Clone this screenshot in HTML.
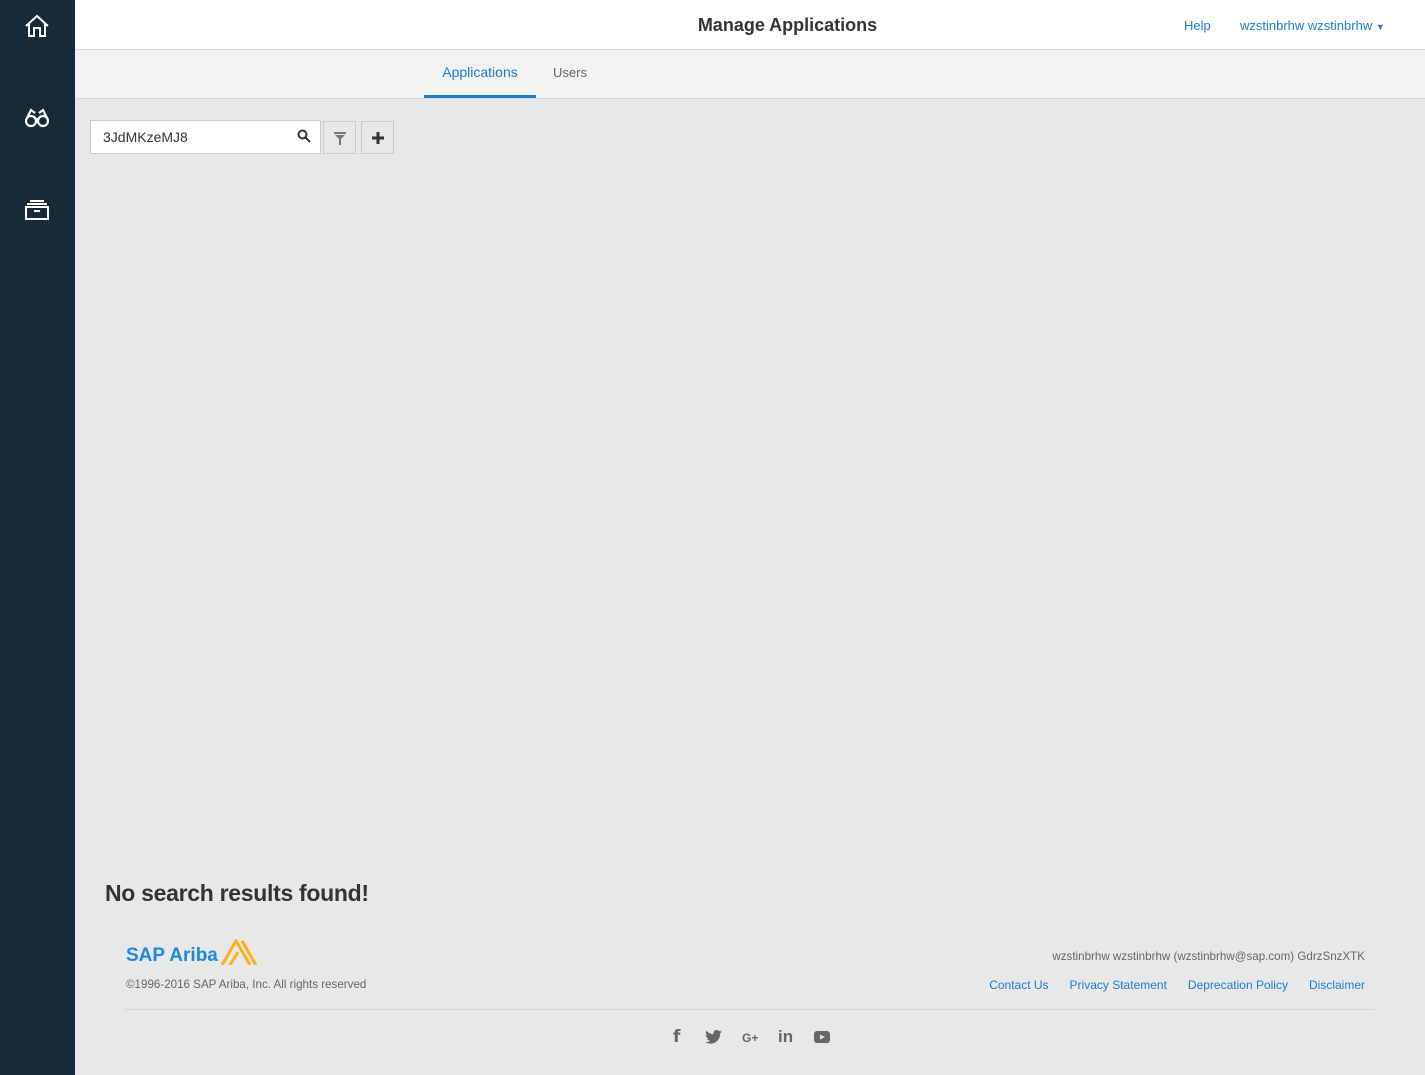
<!DOCTYPE html>
<html><head><meta charset="utf-8"><style>
*{margin:0;padding:0;box-sizing:border-box}
body{width:1425px;height:1075px;background:#e8e8e8;font-family:"Liberation Sans",sans-serif;position:relative;overflow:hidden}
.side{position:absolute;left:0;top:0;width:75px;height:1075px;background:#162a37}
.side svg{position:absolute;left:24px}
.top{position:absolute;left:75px;top:0;right:0;height:50px;background:#fff;border-bottom:1px solid #d8d8d8}
.title{position:absolute;left:75px;right:0;top:15px;text-align:center;font-size:18px;color:#333;font-weight:bold}
.help{position:absolute;left:1109px;top:18px;font-size:13px;color:#1e7ccf}
.user{position:absolute;left:1165px;top:18px;font-size:13px;color:#1e7ccf}
.tabs{position:absolute;left:75px;top:50px;right:0;height:49px;background:#f2f2f2;border-bottom:1px solid #d8d8d8}
.tab{position:absolute;top:14px;font-size:14px}
.t1{left:349px;width:112px;text-align:center;color:#1e7ccf;height:34px;border-bottom:3px solid #1e7ccf}
.t2{left:478px;color:#666;font-size:13px;top:15px}
.search{position:absolute;left:90px;top:120px;width:231px;height:34px;background:#fff;border:1px solid #ccc;font-size:14px;color:#333;padding:8px 12px}
.btn{position:absolute;top:121px;width:33px;height:33px;border:1px solid #ccc;background:#e8e8e8}
.nores{position:absolute;left:105px;top:880px;font-size:23px;color:#333;font-weight:bold;letter-spacing:-0.3px}
.logo{position:absolute;left:126px;top:939px;font-size:19px;font-weight:bold;color:#1e88d8}
.copy{position:absolute;left:126px;top:978px;font-size:11.6px;color:#666}
.uinfo{position:absolute;right:60px;top:950px;font-size:11.6px;color:#666}
.links{position:absolute;right:60px;top:978px;font-size:12px;color:#1e7ccf}
.links span{margin-left:21px}
.hr{position:absolute;left:125px;right:50px;top:1009px;border-top:1px solid #d4d4d4}
.soc{position:absolute;top:1028px;font-size:15px;color:#666;font-weight:bold}
</style></head><body>
<div class="side">
<svg style="top:14px" width="26" height="24" viewBox="0 0 26 24" fill="none" stroke="#fff" stroke-width="2"><path d="M2 12 L13 2 L24 12 M5 10 V22 H10 V14 H16 V22 H21 V10"/></svg>
<svg style="top:107px" width="26" height="22" viewBox="0 0 26 22" fill="none" stroke="#fff" stroke-width="2.2"><circle cx="7" cy="14" r="5"/><circle cx="19" cy="14" r="5"/><path d="M3 11 L7 3 L11 6 M23 11 L19 3 L15 6 M11 12 H15"/></svg>
<svg style="top:199px" width="26" height="22" viewBox="0 0 26 22" fill="none" stroke="#fff" stroke-width="2"><path d="M6 2 H20 M3 5 H23 M2 8 H24 V20 H2 Z M10 12 H16"/></svg>
</div>
<div class="top"><div class="title">Manage Applications</div><div class="help">Help</div><div class="user">wzstinbrhw wzstinbrhw <span style="font-size:9px">&#9660;</span></div></div>
<div class="tabs"><div class="tab t1">Applications</div><div class="tab t2">Users</div></div>
<div class="search">3JdMKzeMJ8
<svg style="position:absolute;right:9px;top:8px" width="14" height="14" viewBox="0 0 14 14" fill="none" stroke="#333" stroke-width="2"><circle cx="5.5" cy="5.5" r="4"/><path d="M8.5 8.5 L13 13"/></svg></div>
<div class="btn" style="left:323px"><svg style="margin:10px 0 0 10px" width="12" height="13" viewBox="0 0 12 13" fill="#777"><path d="M0 0H12V2H0Z M1 3H11L7 7V13H5V7Z"/></svg></div>
<div class="btn" style="left:361px"><svg style="margin:10px 0 0 10px" width="12" height="12" viewBox="0 0 12 12" fill="#333"><path d="M4.5 0H7.5V4.5H12V7.5H7.5V12H4.5V7.5H0V4.5H4.5Z"/></svg></div>
<div class="nores">No search results found!</div>
<div class="logo">SAP Ariba <svg style="vertical-align:-4px;margin-left:-3px" width="38" height="26" viewBox="0 0 38 26" fill="none" stroke="#f5b21b" stroke-width="3"><path d="M2 26 L16 2 L30 26 M10 26 L18 13 M22 2 L36 26"/></svg></div>
<div class="copy">©1996-2016 SAP Ariba, Inc. All rights reserved</div>
<div class="uinfo">wzstinbrhw wzstinbrhw (wzstinbrhw@sap.com) GdrzSnzXTK</div>
<div class="links"><span>Contact Us</span><span>Privacy Statement</span><span>Deprecation Policy</span><span>Disclaimer</span></div>
<div class="hr"></div>
<div class="soc" style="left:673px;font-size:17px;top:1027px;font-family:'DejaVu Sans'">f</div>
<svg class="soc" style="left:705px;top:1030px" width="17" height="14" viewBox="0 0 24 20"><path fill="#666" d="M24 2.4c-.9.4-1.8.7-2.8.8 1-.6 1.8-1.6 2.2-2.7-1 .6-2 1-3.1 1.2C19.3.7 18 0 16.6 0c-2.7 0-4.900 2.2-4.9 4.9 0 .4 0 .8.1 1.1C7.7 5.8 4.1 3.9 1.7.9c-.4.7-.7 1.6-.7 2.5 0 1.7.9 3.2 2.2 4.1-.8 0-1.600-.2-2.2-.6v.1c0 2.4 1.7 4.4 3.9 4.8-.4.1-.8.2-1.3.2-.3 0-.6 0-.9-.1.6 2 2.4 3.4 4.6 3.4-1.7 1.3-3.8 2.1-6.1 2.1-.4 0-.8 0-1.2-.1 2.2 1.4 4.8 2.2 7.5 2.2 9.1 0 14-7.5 14-14v-.6c1-.7 1.8-1.6 2.5-2.5z"/></svg>
<div class="soc" style="left:742px;font-size:12px;top:1031px">G+</div>
<div class="soc" style="left:778px;font-size:17px;top:1027px">in</div>
<svg class="soc" style="left:814px;top:1031px" width="16" height="12" viewBox="0 0 16 12"><rect width="16" height="12" rx="3" fill="#666"/><path d="M6 3.5 L11 6 L6 8.5Z" fill="#e8e8e8"/></svg>
</body></html>
